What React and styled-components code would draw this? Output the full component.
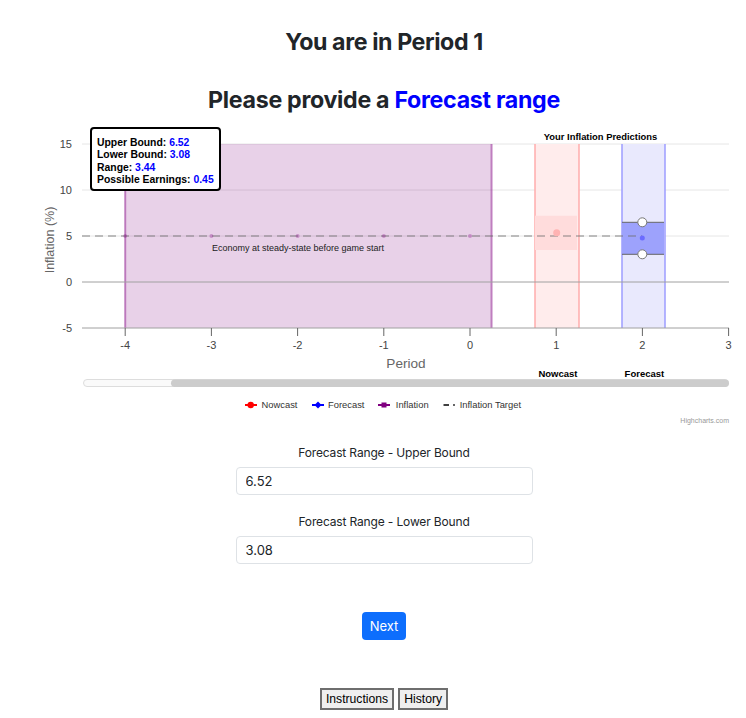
import React from 'react';
import styled, { createGlobalStyle } from 'styled-components';

const GlobalStyle = createGlobalStyle`
  body {
    margin: 0;
    background: #fff;
    font-family: Inter, "Liberation Sans", sans-serif;
    color: #212529;
  }
`;

// plot scale: period -> x, inflation -> y
const X = (v) => 470 + 86.2 * v;
const Y = (v) => 282 - 9.2 * v;

const PERIODS = [-4, -3, -2, -1, 0, 1, 2, 3];
const LEVELS = [15, 10, 5, 0, -5];

const tooltipRows = [
    ['Upper Bound: ', '6.52'],
    ['Lower Bound: ', '3.08'],
    ['Range: ', '3.44'],
    ['Possible Earnings: ', '0.45'],
];

function InflationChart() {
    return (
        <ChartSvg width="724" height="310" viewBox="22 122 724 310">
            {/* grid */}
            {[15, 10, 5].map((v) => (
                <line key={v} x1="82" x2="729" y1={Y(v)} y2={Y(v)} stroke="#e6e6e6" />
            ))}

            {/* steady state band */}
            <rect x={X(-4)} y={Y(15)} width={X(0.25) - X(-4)} height={Y(-5) - Y(15)} fill="rgba(128,0,128,0.18)" />
            <line x1={X(-4)} x2={X(-4)} y1={Y(15)} y2={Y(-5)} stroke="rgba(150,40,150,0.55)" strokeWidth="2" />
            <line x1={X(0.25)} x2={X(0.25)} y1={Y(15)} y2={Y(-5)} stroke="rgba(150,40,150,0.55)" strokeWidth="2" />

            {/* nowcast band */}
            <rect x="535" y={Y(15)} width="44" height={Y(-5) - Y(15)} fill="#ffecec" />
            <line x1="535" x2="535" y1={Y(15)} y2={Y(-5)} stroke="#ffacac" strokeWidth="1.5" />
            <line x1="579" x2="579" y1={Y(15)} y2={Y(-5)} stroke="#ffacac" strokeWidth="1.5" />
            <rect x="535" y="215.7" width="42" height="34.3" fill="#ffdcdc" />

            {/* forecast band */}
            <rect x="622" y={Y(15)} width="43" height={Y(-5) - Y(15)} fill="#e9e9fd" />
            <line x1="622" x2="622" y1={Y(15)} y2={Y(-5)} stroke="#9c9cff" strokeWidth="1.5" />
            <line x1="665" x2="665" y1={Y(15)} y2={Y(-5)} stroke="#9c9cff" strokeWidth="1.5" />
            <rect x="622" y="222.3" width="42" height="32" fill="#9da2fc" />
            <line x1="622" x2="664" y1="222.3" y2="222.3" stroke="#666" />
            <line x1="622" x2="664" y1="254.3" y2="254.3" stroke="#666" />

            {/* zero and axis lines */}
            <line x1="82" x2="729" y1={Y(0)} y2={Y(0)} stroke="#a0a0a0" />
            <line x1="82" x2="729" y1={Y(-5)} y2={Y(-5)} stroke="#a0a0a0" />
            {PERIODS.map((p) => (
                <line key={p} x1={X(p)} x2={X(p)} y1={Y(-5)} y2={Y(-5) + 8} stroke="#666" />
            ))}

            {/* inflation target */}
            <line x1="82" x2="642" y1={Y(5)} y2={Y(5)} stroke="rgba(110,110,110,0.55)" strokeWidth="1.5" strokeDasharray="8 5" />
            {[-4, -3, -2, -1, 0].map((p) => (
                <circle key={p} cx={X(p)} cy={Y(5)} r="2" fill="rgba(128,0,128,0.3)" />
            ))}
            <circle cx="556.7" cy="232.7" r="3.5" fill="#ffb3b3" />
            <circle cx="642.3" cy="238" r="2.5" fill="#6b6bff" />
            <circle cx="642.3" cy="222.3" r="4.5" fill="#fff" stroke="#777" />
            <circle cx="642.3" cy="254.3" r="4.5" fill="#fff" stroke="#777" />

            <ChartText x="600.5" y="140" $size={9.4} $bold $anchor="middle" $fill="#000">Your Inflation Predictions</ChartText>
            <ChartText x="298" y="250.7" $size={9} $anchor="middle" $fill="#222">Economy at steady-state before game start</ChartText>

            {/* axes labels */}
            {LEVELS.map((v) => (
                <ChartText key={v} x="72" y={Y(v) + 4} $size={11} $anchor="end" $fill="#444">{v}</ChartText>
            ))}
            <ChartText x="0" y="0" $size={12.5} $anchor="middle" $fill="#666" transform="translate(54 240) rotate(-90)">Inflation (%)</ChartText>
            {PERIODS.map((p) => (
                <ChartText key={p} x={X(p)} y="349" $size={11} $anchor="middle" $fill="#444">{p}</ChartText>
            ))}
            <ChartText x="406" y="368" $size={13.6} $anchor="middle" $fill="#666">Period</ChartText>
            <ChartText x="558" y="376.5" $size={9.5} $bold $anchor="middle" $fill="#000">Nowcast</ChartText>
            <ChartText x="644.4" y="376.5" $size={9.5} $bold $anchor="middle" $fill="#000">Forecast</ChartText>

            {/* navigator scrollbar */}
            <rect x="83.5" y="379.5" width="645" height="7" rx="3.5" fill="#fafafa" stroke="#ddd" />
            <rect x="171" y="379.5" width="558" height="7.5" rx="3.7" fill="#cccccc" />

            {/* legend */}
            <line x1="245" x2="257" y1="405" y2="405" stroke="#f00" strokeWidth="2" />
            <circle cx="250.7" cy="405" r="3.2" fill="#f00" />
            <ChartText x="261.5" y="408.3" $size={9.4} $fill="#333">Nowcast</ChartText>

            <line x1="312" x2="324" y1="405" y2="405" stroke="#00f" strokeWidth="2" />
            <path d="M318 401.5 L321.5 405 L318 408.5 L314.5 405 Z" fill="#00f" />
            <ChartText x="328" y="408.3" $size={9.4} $fill="#333">Forecast</ChartText>

            <line x1="378" x2="390" y1="405" y2="405" stroke="#800080" strokeWidth="2" />
            <rect x="381.5" y="402.5" width="5" height="5" fill="#800080" />
            <ChartText x="395.8" y="408.3" $size={9.4} $fill="#333">Inflation</ChartText>

            <line x1="443.5" x2="449" y1="405" y2="405" stroke="#000" strokeWidth="1.5" />
            <line x1="453.2" x2="454.8" y1="405" y2="405" stroke="#000" strokeWidth="1.5" />
            <ChartText x="459.7" y="408.3" $size={9.4} $fill="#333">Inflation Target</ChartText>

            <ChartText x="729" y="423" $size={7} $anchor="end" $fill="#999">Highcharts.com</ChartText>

            {/* tooltip */}
            <rect x="91" y="128" width="129" height="62" rx="3" fill="#fff" stroke="#000" strokeWidth="2" />
            {tooltipRows.map(([label, value], i) => (
                <ChartText key={label} x="97" y={146 + i * 12.4} $size={10.4} $bold $fill="#000">
                    {label}
                    <tspan fill="#0000ff">{value}</tspan>
                </ChartText>
            ))}
        </ChartSvg>
    );
}

function App() {
    return (
        <>
            <GlobalStyle />
            <Page>
                <Title>You are in Period 1</Title>
                <Subtitle>
                    Please provide a <Highlight>Forecast range</Highlight>
                </Subtitle>

                <InflationChart />

                <FieldLabel htmlFor="upper" $gap={13}>Forecast Range - Upper Bound</FieldLabel>
                <BoundInput id="upper" type="text" defaultValue="6.52" />

                <FieldLabel htmlFor="lower" $gap={19}>Forecast Range - Lower Bound</FieldLabel>
                <BoundInput id="lower" type="text" defaultValue="3.08" />

                <NextButton type="button">Next</NextButton>

                <FooterRow>
                    <LegacyButton type="button">Instructions</LegacyButton>
                    <LegacyButton type="button">History</LegacyButton>
                </FooterRow>
            </Page>
        </>
    );
}

const Page = styled.div`
    width: 724px;
    margin-left: 22px;
    padding-top: 28px;
    display: flex;
    flex-direction: column;
    align-items: center;
`

const Title = styled.h1`
    margin: 0;
    font-size: 23.2px;
    line-height: 29px;
    font-weight: 700;
    letter-spacing: -0.4px;
    color: #212529;
`

const Subtitle = styled(Title)`
    margin-top: 29px;
    letter-spacing: -0.3px;
`

const Highlight = styled.span`
    color: #0000ff;
`

const ChartSvg = styled.svg`
    display: block;
    margin-top: 7px;
    font-family: "Liberation Sans", Arial, sans-serif;
`

const ChartText = styled.text`
    font-size: ${(p) => p.$size}px;
    font-weight: ${(p) => (p.$bold ? 700 : 400)};
    text-anchor: ${(p) => p.$anchor || 'start'};
    fill: ${(p) => p.$fill};
`

const FieldLabel = styled.label`
    margin-top: ${(p) => p.$gap}px;
    font-size: 12px;
    line-height: 16px;
    letter-spacing: -0.15px;
    color: #212529;
`

const BoundInput = styled.input`
    box-sizing: border-box;
    width: 297px;
    height: 28px;
    margin-top: 6px;
    padding: 0 9px;
    border: 1px solid #dee2e6;
    border-radius: 4px;
    font-family: Inter, "Liberation Sans", sans-serif;
    font-size: 13px;
    color: #212529;
    outline: none;
`

const NextButton = styled.button`
    margin-top: 48px;
    width: 44px;
    height: 28px;
    border: none;
    border-radius: 4px;
    background: #0d6efd;
    color: #fff;
    font-family: Inter, "Liberation Sans", sans-serif;
    font-size: 13px;
`

const FooterRow = styled.div`
    margin-top: 48px;
    display: flex;
    gap: 4px;
`

const LegacyButton = styled.button`
    height: 22px;
    padding: 0 4px;
    border: 2px solid #6e6e6e;
    border-radius: 0;
    background: #efefef;
    color: #000;
    font-family: "Liberation Sans", Arial, sans-serif;
    font-size: 12.2px;
`

export default App
